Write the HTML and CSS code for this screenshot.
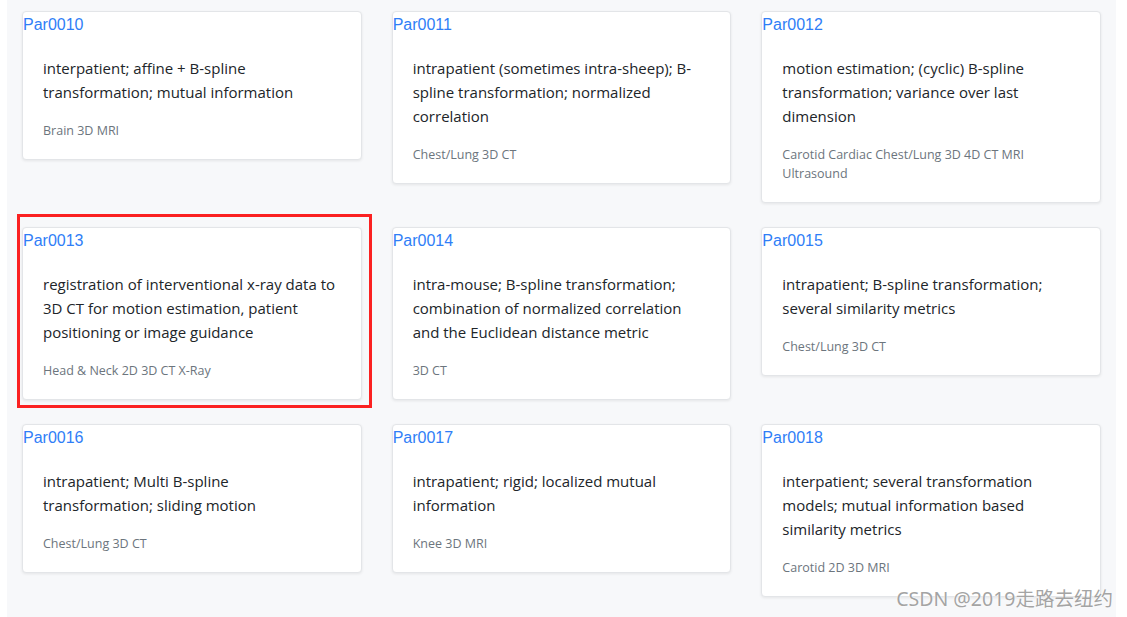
FILE: index.html
```html
<!DOCTYPE html>
<html lang="en">
<head>
<meta charset="utf-8">
<title>Parameter files</title>
<link rel="stylesheet" href="styles.css">
</head>
<body>
<div class="page">
  <div class="grid">
    <div class="card">
      <a class="card-title" href="#">Par0010</a>
      <div class="card-body">
        <p class="desc">interpatient; affine + B-spline transformation; mutual information</p>
        <p class="tags">Brain 3D MRI</p>
      </div>
    </div>
    <div class="card">
      <a class="card-title" href="#">Par0011</a>
      <div class="card-body">
        <p class="desc">intrapatient (sometimes intra-sheep); B-spline transformation; normalized correlation</p>
        <p class="tags">Chest/Lung 3D CT</p>
      </div>
    </div>
    <div class="card">
      <a class="card-title" href="#">Par0012</a>
      <div class="card-body">
        <p class="desc">motion estimation; (cyclic) B-spline transformation; variance over last dimension</p>
        <p class="tags">Carotid Cardiac Chest/Lung 3D 4D CT MRI Ultrasound</p>
      </div>
    </div>
    <div class="card card-marked">
      <a class="card-title" href="#">Par0013</a>
      <div class="card-body">
        <p class="desc">registration of interventional x-ray data to 3D CT for motion estimation, patient positioning or image guidance</p>
        <p class="tags">Head &amp; Neck 2D 3D CT X-Ray</p>
      </div>
      <span class="mark"></span>
    </div>
    <div class="card">
      <a class="card-title" href="#">Par0014</a>
      <div class="card-body">
        <p class="desc">intra-mouse; B-spline transformation; combination of normalized correlation and the Euclidean distance metric</p>
        <p class="tags">3D CT</p>
      </div>
    </div>
    <div class="card">
      <a class="card-title" href="#">Par0015</a>
      <div class="card-body">
        <p class="desc">intrapatient; B-spline transformation; several similarity metrics</p>
        <p class="tags">Chest/Lung 3D CT</p>
      </div>
    </div>
    <div class="card">
      <a class="card-title" href="#">Par0016</a>
      <div class="card-body">
        <p class="desc">intrapatient; Multi B-spline transformation; sliding motion</p>
        <p class="tags">Chest/Lung 3D CT</p>
      </div>
    </div>
    <div class="card">
      <a class="card-title" href="#">Par0017</a>
      <div class="card-body">
        <p class="desc">intrapatient; rigid; localized mutual information</p>
        <p class="tags">Knee 3D MRI</p>
      </div>
    </div>
    <div class="card">
      <a class="card-title" href="#">Par0018</a>
      <div class="card-body">
        <p class="desc">interpatient; several transformation models; mutual information based similarity metrics</p>
        <p class="tags">Carotid 2D 3D MRI</p>
      </div>
    </div>
  </div>
</div>
<div class="watermark">CSDN @2019走路去纽约</div>
</body>
</html>
```

FILE: styles.css
```css
html, body {
  margin: 0;
  padding: 0;
  background: #ffffff;
}

body {
  width: 1127px;
  height: 617px;
  overflow: hidden;
  position: relative;
  font-family: "Open Sans", "Noto Sans", sans-serif;
}

.page {
  margin-left: 7px;
  width: 1109px;
  min-height: 617px;
  box-sizing: border-box;
  background: #f7f8fa;
  padding: 11px 15px 0 15px;
}

.grid {
  display: grid;
  grid-template-columns: repeat(3, 1fr);
  column-gap: 30px;
  row-gap: 24px;
  align-items: start;
}

.card {
  position: relative;
  background: #ffffff;
  border: 1px solid #e3e5e8;
  border-radius: 4px;
  box-shadow: 0 1px 3px rgba(0, 0, 0, 0.08);
}

.card-title {
  display: block;
  padding-top: 1px;
  font-family: "Liberation Sans", Arial, sans-serif;
  font-size: 16px;
  line-height: 24px;
  color: #2f7ef7;
  text-decoration: none;
}

.card-body {
  padding: 19px 20px 19px 20px;
}

.desc {
  margin: 0;
  font-size: 15px;
  line-height: 24px;
  color: #212529;
}

.tags {
  margin: 17px 0 0 0;
  font-size: 12.5px;
  line-height: 19px;
  color: #6c757d;
}

.mark {
  position: absolute;
  top: -14px;
  left: -6px;
  right: -11px;
  bottom: -9px;
  border: 3px solid #fb2121;
  pointer-events: none;
}

.watermark {
  position: absolute;
  right: 14px;
  bottom: 7px;
  font-family: "Noto Sans", "Noto Sans CJK SC", sans-serif;
  font-size: 19.5px;
  line-height: 22px;
  color: #a4a4a4;
  text-shadow: 0 0 2px #ffffff, 0 0 1px #ffffff;
}
```
